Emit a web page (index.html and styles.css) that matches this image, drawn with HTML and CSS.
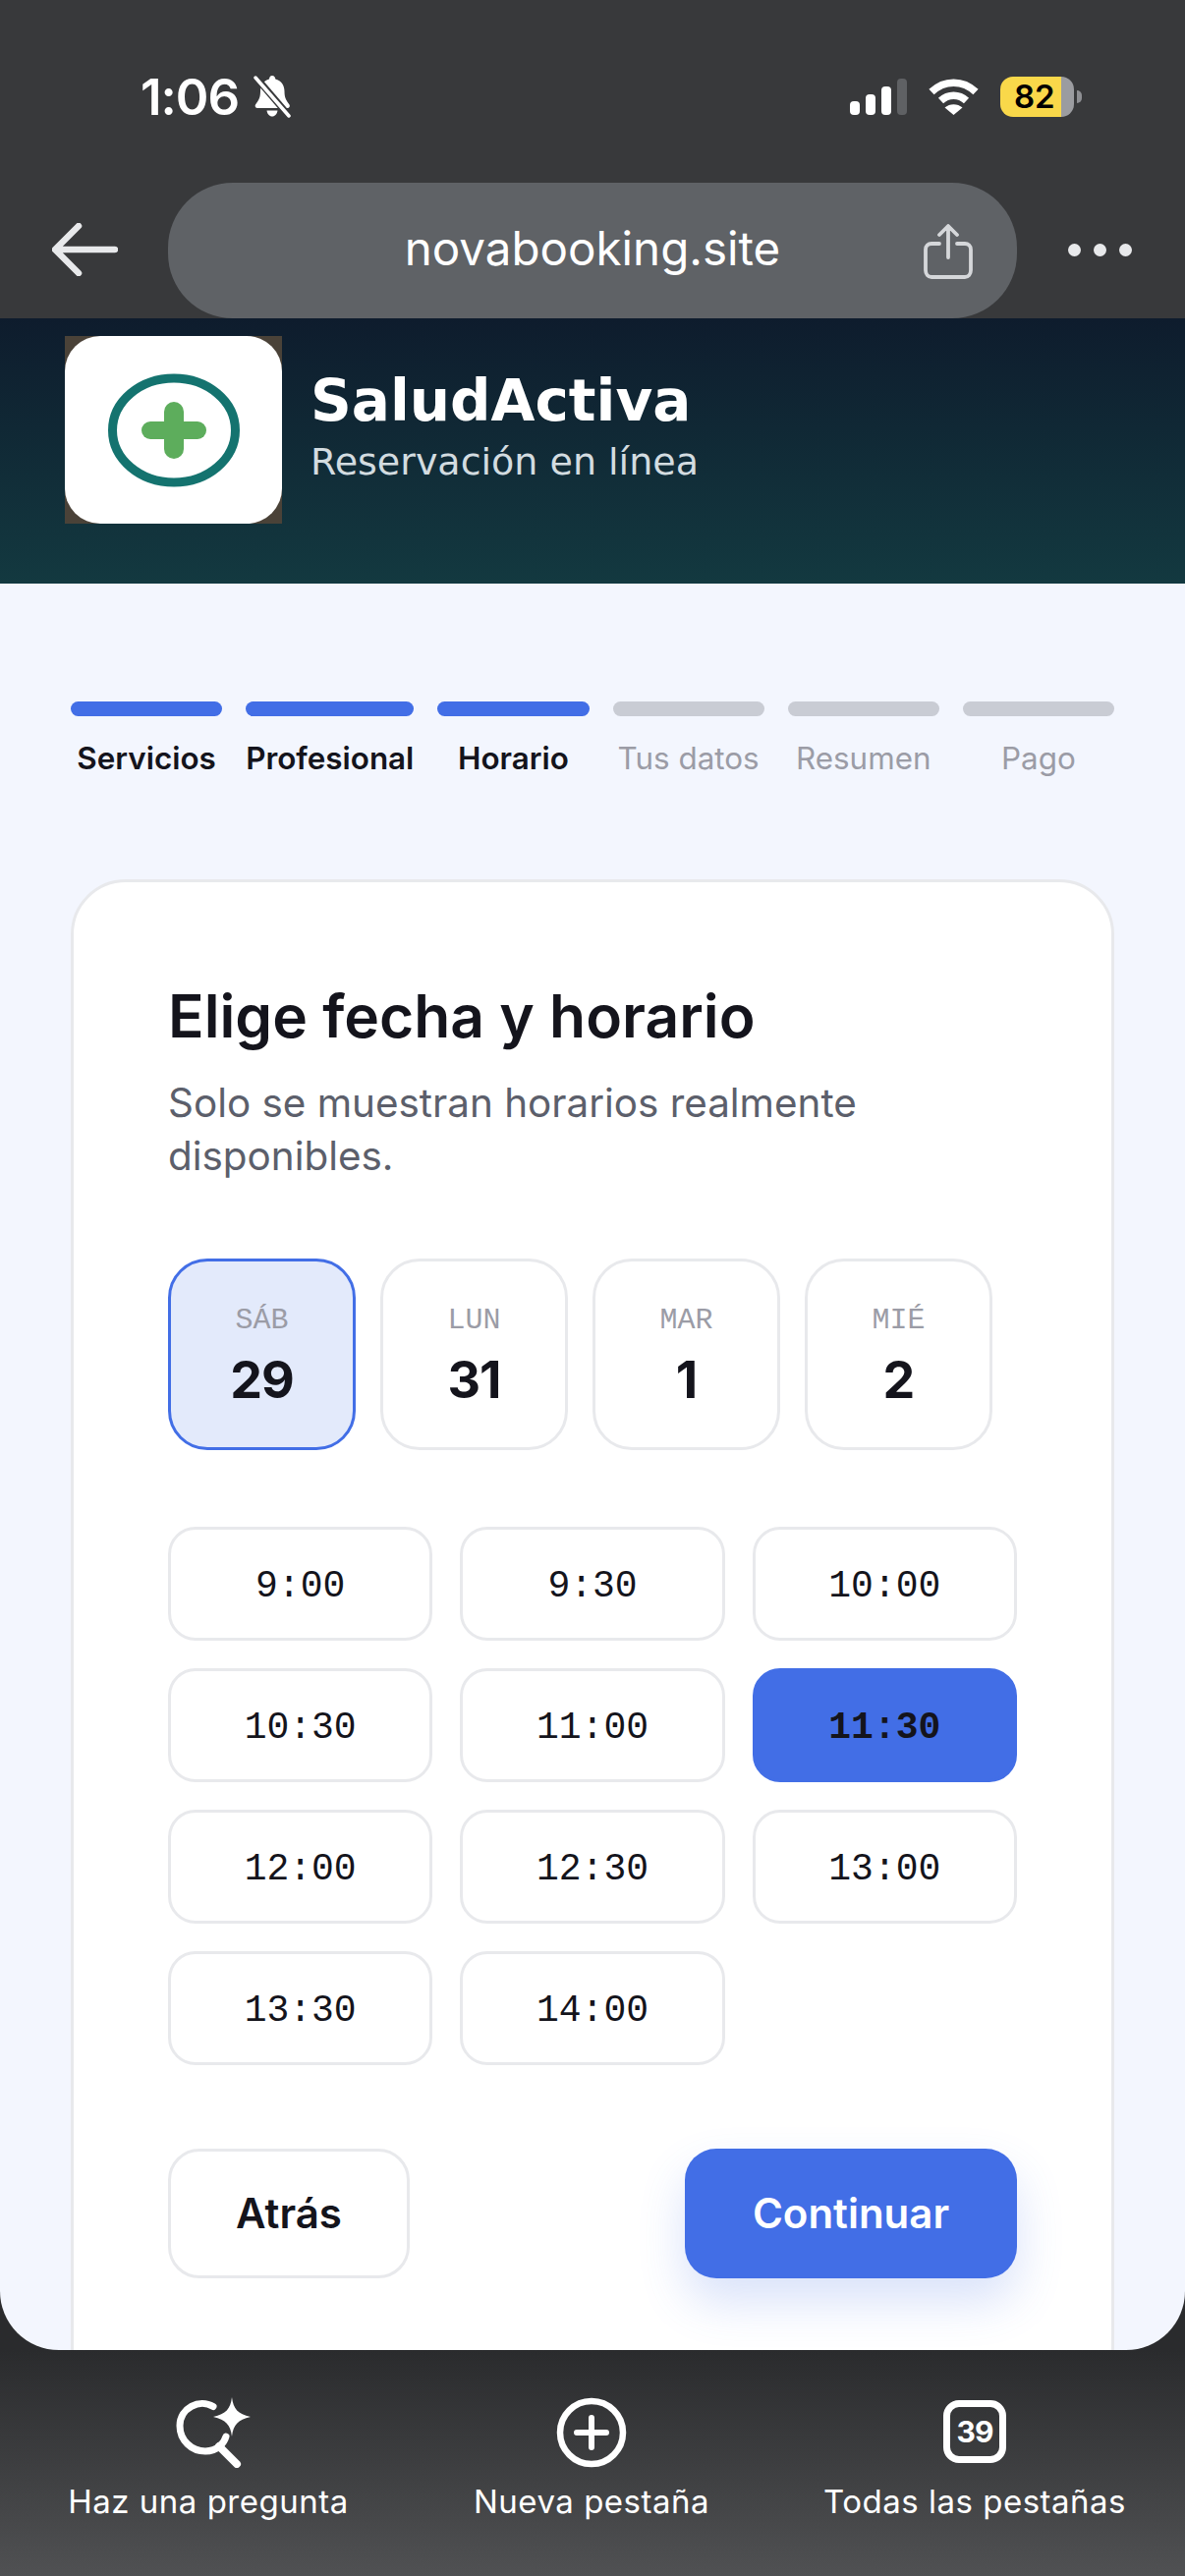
FILE: index.html
```html
<!DOCTYPE html>
<html lang="es">
<head>
  <meta charset="UTF-8" />
  <title>SaludActiva - Reservación en línea</title>
  <link rel="stylesheet" href="styles.css">
</head>
<body>
  <div class="screen">

    <!-- Barra del navegador -->
    <div class="chrome">
      <div class="status">
        <div class="status-left">
          <span class="clock">1:06</span>
          <svg class="bell" width="42" height="44" viewBox="0 0 42 44">
            <path fill="#fff" d="M21 1c2 0 3 1.500 3.300 3.400 6 1.400 9.200 6.200 9.200 12.600 0 6 1.500 9 5 13.500 1 1.500 0 3.500-2 3.500H6c-2 0-3-2-2-3.500 3.500-4.500 5-7.500 5-13.500 0-6.400 3.200-11.200 9-12.600C18.300 2.500 19 1 21 1z"/>
            <path fill="#fff" d="M15.500 36.500h11c-.5 3.500-2.700 6-5.500 6s-5-2.500-5.500-6z"/>
            <path stroke="#38393b" stroke-width="7" d="M3 1l36 42"/>
            <path stroke="#fff" stroke-width="3.500" stroke-linecap="round" d="M4 3l34 39"/>
          </svg>
        </div>
        <div class="status-right">
          <svg width="58" height="37" viewBox="0 0 58 37">
            <rect x="0" y="23" width="10" height="14" rx="4" fill="#fff"/>
            <rect x="16" y="16" width="10" height="21" rx="4" fill="#fff"/>
            <rect x="32" y="8" width="10" height="29" rx="4" fill="#fff"/>
            <rect x="48" y="0" width="10" height="37" rx="4" fill="#5f6164"/>
          </svg>
          <svg width="51" height="37" viewBox="0 0 51 37">
            <path fill="none" stroke="#fff" stroke-width="7.500" d="M3 13.500C16 1 35 1 48 13.500"/>
            <path fill="none" stroke="#fff" stroke-width="7.500" d="M12.500 22.500c7.500-7 18.500-7 26 0"/>
            <path fill="#fff" d="M16.500 29.500c5-4.500 13-4.500 18 0L25.500 37z"/>
          </svg>
          <div class="battery"><span>82</span></div>
        </div>
      </div>
      <div class="urlbar">
        <svg class="back" width="67" height="54" viewBox="0 0 67 54">
          <path fill="none" stroke="#e8e9eb" stroke-width="6.500" stroke-linecap="round" stroke-linejoin="round" d="M27 3L3 27l24 24M4 27h60"/>
        </svg>
        <div class="pill">
          <span class="url">novabooking.site</span>
          <svg class="share" width="50" height="56" viewBox="0 0 50 56">
            <path fill="none" stroke="#d5d7da" stroke-width="3.800" stroke-linecap="round" stroke-linejoin="round" d="M25 34V3M16 11l9-9 9 9M16 20H8c-3.500 0-6 2.500-6 6v21c0 4 2.500 7 6 7h34c3.500 0 6-3 6-7V26c0-3.500-2.500-6-6-6h-8"/>
          </svg>
        </div>
        <div class="dots"><i></i><i></i><i></i></div>
      </div>
    </div>

    <!-- Cabecera -->
    <header class="brand">
      <div class="logo">
        <div class="logo-inner">
          <svg width="221" height="191" viewBox="0 0 221 191">
            <ellipse cx="111" cy="96" rx="62.500" ry="53" fill="none" stroke="#14736f" stroke-width="9"/>
            <rect x="78" y="87" width="66" height="18" rx="9" fill="#5dad5c"/>
            <rect x="101" y="67" width="20" height="58" rx="10" fill="#5dad5c"/>
          </svg>
        </div>
      </div>
      <div class="brand-text">
        <h2>SaludActiva</h2>
        <p>Reservación en línea</p>
      </div>
    </header>

    <main class="content">
      <!-- Pasos -->
      <div class="steps">
        <div class="step done"><span class="bar"></span><span class="name">Servicios</span></div>
        <div class="step done"><span class="bar"></span><span class="name">Profesional</span></div>
        <div class="step done"><span class="bar"></span><span class="name">Horario</span></div>
        <div class="step"><span class="bar"></span><span class="name">Tus datos</span></div>
        <div class="step"><span class="bar"></span><span class="name">Resumen</span></div>
        <div class="step"><span class="bar"></span><span class="name">Pago</span></div>
      </div>

      <section class="card">
        <h1>Elige fecha y horario</h1>
        <p class="hint">Solo se muestran horarios realmente disponibles.</p>

        <div class="days">
          <div class="day selected"><span class="dow">SÁB</span><span class="num">29</span></div>
          <div class="day"><span class="dow">LUN</span><span class="num">31</span></div>
          <div class="day"><span class="dow">MAR</span><span class="num">1</span></div>
          <div class="day"><span class="dow">MIÉ</span><span class="num">2</span></div>
        </div>

        <div class="times">
          <div class="time">9:00</div>
          <div class="time">9:30</div>
          <div class="time">10:00</div>
          <div class="time">10:30</div>
          <div class="time">11:00</div>
          <div class="time selected">11:30</div>
          <div class="time">12:00</div>
          <div class="time">12:30</div>
          <div class="time">13:00</div>
          <div class="time">13:30</div>
          <div class="time">14:00</div>
        </div>

        <div class="actions">
          <button class="btn-back">Atrás</button>
          <button class="btn-next">Continuar</button>
        </div>
      </section>
    </main>

    <!-- Barra inferior -->
    <nav class="bottom">
      <div class="tool">
        <svg class="ask" width="80" height="72" viewBox="0 0 80 72">
          <path fill="none" stroke="#fff" stroke-width="7" stroke-linecap="round" d="M38 9.500C24 1 4 11 4 29c0 15 12 26 26 26 6 0 11-2 15-5.500 3-2.700 5-6 6-9.500"/>
          <path fill="none" stroke="#fff" stroke-width="8" stroke-linecap="round" d="M44 50l18 18"/>
          <path fill="#fff" d="M57 0c1.500 12 6 17 19 20-13 3-17.500 8-19 20-1.500-12-6-17-19-20 13-3 17.500-8 19-20z"/>
        </svg>
        <span>Haz una pregunta</span>
      </div>
      <div class="tool">
        <svg width="72" height="72" viewBox="0 0 72 72">
          <circle cx="36" cy="36" r="32" fill="none" stroke="#fff" stroke-width="6.500"/>
          <path fill="none" stroke="#fff" stroke-width="6" stroke-linecap="round" d="M36 21v30M21 36h30"/>
        </svg>
        <span>Nueva pestaña</span>
      </div>
      <div class="tool">
        <div class="tabs-box"><b>39</b></div>
        <span>Todas las pestañas</span>
      </div>
    </nav>
  </div>
</body>
</html>
```

FILE: styles.css
```css
* {
  box-sizing: border-box;
}

body {
  margin: 0;
  background-color: #2a2b2d;
  font-family: 'Inter', 'Noto Sans', sans-serif;
}

.screen {
  width: 1206px;
  height: 2622px;
  display: flex;
  flex-direction: column;
  overflow: hidden;
  background-color: #2a2b2d;
}

/* Barra del navegador */
.chrome {
  height: 324px;
  flex: none;
  background-color: #38393b;
}

.status {
  height: 56px;
  margin-top: 70px;
  padding: 0 113px 0 143px;
  display: flex;
  justify-content: space-between;
  align-items: center;
}

.status-left {
  display: flex;
  align-items: center;
  gap: 13px;
}

.clock {
  color: white;
  font-size: 51px;
  font-weight: 600;
  letter-spacing: -1px;
}

.status-right {
  display: flex;
  align-items: center;
  gap: 22px;
}

.battery {
  position: relative;
  width: 75px;
  height: 41px;
  border-radius: 13px;
  background: linear-gradient(to right, #f9d84a 83%, #9b9ca0 83%);
  color: #000;
  font-size: 33px;
  font-weight: 600;
  line-height: 41px;
  padding-left: 14px;
}

.battery::after {
  content: "";
  position: absolute;
  right: -8px;
  top: 14px;
  width: 5px;
  height: 13px;
  border-radius: 0 6px 6px 0;
  background-color: #8e8f93;
}

.urlbar {
  height: 138px;
  margin-top: 60px;
  padding: 0 54px 0 53px;
  display: flex;
  align-items: center;
}

.back {
  flex: none;
  margin-right: 51px;
  margin-top: -2px;
}

.pill {
  width: 864px;
  height: 138px;
  flex: none;
  border-radius: 66px;
  background-color: #5f6266;
  display: flex;
  align-items: center;
  justify-content: center;
  position: relative;
}

.url {
  color: white;
  font-size: 47.500px;
  margin-top: -6px;
}

.share {
  position: absolute;
  right: 45px;
  top: 42px;
}

.dots {
  margin-left: auto;
  display: flex;
  gap: 13px;
  margin-top: -2px;
}

.dots i {
  display: block;
  width: 13px;
  height: 13px;
  border-radius: 50%;
  background-color: #e8e9eb;
}

/* Cabecera */
.brand {
  height: 270px;
  flex: none;
  padding: 18px 66px 0;
  background: linear-gradient(to bottom, #0e1c2d, #133940);
  display: flex;
  align-items: flex-start;
  gap: 30px;
}

.logo {
  width: 221px;
  height: 191px;
  flex: none;
  background-color: #4a4238;
}

.logo-inner {
  width: 100%;
  height: 100%;
  border-radius: 36px;
  background-color: white;
}

.logo-inner svg {
  display: block;
}

.brand-text {
  padding-top: 32px;
  margin-left: -1px;
}

.brand-text h2 {
  margin: 0;
  color: white;
  font-family: 'DejaVu Sans', sans-serif;
  font-size: 58px;
  font-weight: 700;
  line-height: 68px;
}

.brand-text p {
  margin: 2px 0 0;
  color: #d3dce0;
  font-family: 'DejaVu Sans', sans-serif;
  font-size: 38px;
  line-height: 52px;
}

/* Contenido */
.content {
  flex: 1;
  min-height: 0;
  overflow: hidden;
  padding: 120px 72px 0;
  background-color: #f3f6fe;
  border-radius: 0 0 60px 60px;
}

.steps {
  display: flex;
  gap: 24px;
}

.step {
  flex: 1 1 0;
  min-width: max-content;
  display: flex;
  flex-direction: column;
  align-items: center;
}

.bar {
  width: 100%;
  height: 15px;
  border-radius: 8px;
  background-color: #c9ccd4;
}

.step.done .bar {
  background-color: #426ee6;
}

.name {
  margin-top: 24px;
  color: #9b9ca6;
  font-size: 31.400px;
  line-height: 38px;
}

.step.done .name {
  color: #14141c;
  font-weight: 600;
}

.card {
  margin-top: 104px;
  padding: 96px 96px 0;
  height: 1600px;
  background-color: white;
  border: 3px solid #e8e9ec;
  border-radius: 56px;
}

h1 {
  margin: 0;
  color: #14141c;
  font-size: 60.500px;
  font-weight: 600;
  line-height: 80px;
}

.hint {
  margin: 22px 0 0;
  color: #5c5f6b;
  font-size: 40.400px;
  line-height: 54px;
}

.days {
  margin-top: 77px;
  display: flex;
  gap: 25px;
}

.day {
  width: 191px;
  height: 195px;
  border: 3px solid #e8e9ec;
  border-radius: 40px;
  display: flex;
  flex-direction: column;
  align-items: center;
  padding-top: 42px;
}

.day.selected {
  background-color: #e3eafb;
  border-color: #426ee6;
}

.dow {
  color: #9b9ca6;
  font-family: 'Liberation Mono', monospace;
  font-size: 30px;
  line-height: 36px;
}

.num {
  margin-top: 12px;
  color: #14141c;
  font-size: 52px;
  font-weight: 700;
  letter-spacing: -1px;
  line-height: 62px;
}

.times {
  margin-top: 78px;
  display: grid;
  grid-template-columns: repeat(3, 1fr);
  gap: 28px;
}

.time {
  height: 116px;
  padding-top: 4px;
  border: 3px solid #e8e9ec;
  border-radius: 28px;
  color: #14141c;
  font-family: 'Liberation Mono', monospace;
  font-size: 38px;
  display: flex;
  align-items: center;
  justify-content: center;
}

.time.selected {
  background-color: #426ee6;
  border-color: #426ee6;
  font-weight: 700;
}

.actions {
  margin-top: 85px;
  display: flex;
  justify-content: space-between;
}

.actions button {
  height: 132px;
  padding-bottom: 2px;
  border-radius: 32px;
  font-family: 'Inter', sans-serif;
  font-size: 42px;
  font-weight: 600;
}

.btn-back {
  width: 246px;
  background-color: white;
  border: 3px solid #e8e9ec;
  color: #14141c;
}

.btn-next {
  width: 338px;
  background-color: #426ee6;
  border: none;
  color: white;
  box-shadow: 0 24px 48px rgba(66, 110, 230, 0.2);
}

/* Barra inferior */
.bottom {
  height: 230px;
  flex: none;
  padding: 48px 0 0 17px;
  background: linear-gradient(to bottom, #2a2b2d, #505153);
  display: grid;
  grid-template-columns: repeat(3, 390px);
}

.tool {
  display: flex;
  flex-direction: column;
  align-items: center;
  color: white;
  font-size: 33px;
  letter-spacing: 0.5px;
}

.tool svg {
  display: block;
}

.tool .ask {
  margin-left: 14px;
}

.tool span {
  margin-top: 13px;
  line-height: 42px;
}

.tabs-box {
  width: 64px;
  height: 64px;
  margin: 3px 0 5px;
  border: 7px solid white;
  border-radius: 16px;
  display: flex;
  align-items: center;
  justify-content: center;
}

.tabs-box b {
  font-size: 30px;
  font-weight: 700;
  letter-spacing: -1px;
}
```
